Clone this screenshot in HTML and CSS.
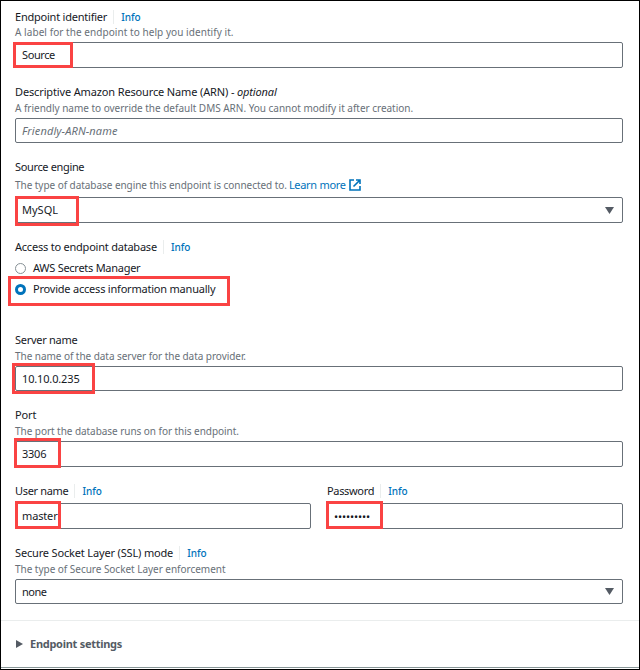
FILE: index.html
```html
<!DOCTYPE html>
<html lang="en">
<head>
<meta charset="utf-8">
<title>Endpoint configuration</title>
<link rel="stylesheet" href="styles.css">
</head>
<body>
<main class="panel">
  <form class="form">
    <section class="field identifier">
      <div class="label"><span class="t-id">Endpoint identifier</span><a class="info">Info</a></div>
      <div class="hint h-id">A label for the endpoint to help you identify it.</div>
      <div class="control"><span class="v-source">Source</span><i class="mark m-source"></i></div>
    </section>
    <section class="field arn">
      <div class="label"><span class="t-arn">Descriptive Amazon Resource Name (ARN) - <em>optional</em></span></div>
      <div class="hint h-arn">A friendly name to override the default DMS ARN. You cannot modify it after creation.</div>
      <div class="control placeholder"><span class="v-arn">Friendly-ARN-name</span></div>
    </section>
    <section class="field engine">
      <div class="label"><span class="t-engine">Source engine</span></div>
      <div class="hint"><span class="h-engine">The type of database engine this endpoint is connected to.</span><a class="learn">Learn more</a><svg class="external" viewBox="0 0 12 12"><path d="M5 1H1v10h10V7M7 1h4v4M11 1L4.5 7.5"/></svg></div>
      <div class="control"><span class="v-mysql">MySQL</span><svg class="caret" viewBox="0 0 9 7"><path d="M0 0h9L4.5 7z"/></svg><i class="mark m-engine"></i></div>
    </section>
    <section class="access">
      <div class="label"><span class="t-access">Access to endpoint database</span><a class="info">Info</a></div>
      <div class="option"><span class="radio"></span><span class="o-aws">AWS Secrets Manager</span></div>
      <div class="option"><span class="radio checked"></span><span class="o-manual">Provide access information manually</span><i class="mark m-manual"></i></div>
    </section>
    <section class="field server">
      <div class="label"><span class="t-server">Server name</span></div>
      <div class="hint h-server">The name of the data server for the data provider.</div>
      <div class="control"><span class="v-ip">10.10.0.235</span><i class="mark m-server"></i></div>
    </section>
    <section class="field port">
      <div class="label"><span class="t-port">Port</span></div>
      <div class="hint h-port">The port the database runs on for this endpoint.</div>
      <div class="control"><span class="v-port">3306</span><i class="mark m-port"></i></div>
    </section>
    <div class="credentials">
      <section>
        <div class="label"><span class="t-user">User name</span><a class="info">Info</a></div>
        <div class="control"><span class="v-master">master</span><i class="mark m-user"></i></div>
      </section>
      <section>
        <div class="label"><span class="t-pass">Password</span><a class="info">Info</a></div>
        <div class="control"><span class="dots">•••••••••</span><i class="mark m-pass"></i></div>
      </section>
    </div>
    <section class="field ssl">
      <div class="label"><span class="t-ssl">Secure Socket Layer (SSL) mode</span><a class="info">Info</a></div>
      <div class="hint h-ssl">The type of Secure Socket Layer enforcement</div>
      <div class="control"><span class="v-none">none</span><svg class="caret" viewBox="0 0 9 7"><path d="M0 0h9L4.5 7z"/></svg></div>
    </section>
  </form>
  <footer class="settings"><svg class="expand" viewBox="0 0 7 8"><path d="M0 0l7 4-7 4z"/></svg><span class="t-set">Endpoint settings</span></footer>
</main>
</body>
</html>
```
FILE: styles.css
```css
* { box-sizing: border-box; }
body { margin: 0; background: #fff; color: #16191f; font: 11px/16px "Noto Sans", "Open Sans", sans-serif; }
.panel { width: 640px; height: 670px; border: 1px solid #000; overflow: hidden; }
.form { height: 619px; padding: 8px 16px 0 14px; }
.label, .hint, .option { display: flex; align-items: center; white-space: nowrap; }
.label { height: 16px; }
.hint { height: 14px; margin-bottom: 3px; color: #687078; font-size: 10px; line-height: 14px; }
.info { display: flex; align-items: center; height: 14px; margin-left: 6px; padding-left: 7px; border-left: 1px solid #eaeded; color: #0073bb; font-size: 10px; font-weight: 500; }
.control { position: relative; display: flex; align-items: center; height: 26px; padding: 0 8px 0 6px; border: 1px solid #687078; border-radius: 2px; white-space: nowrap; }
.identifier { height: 75px; }
.arn { height: 75px; }
.arn .hint { height: 15px; }
.arn .control, .server .control, .ssl .control { height: 25px; }
.placeholder { color: #687078; font-style: italic; }
.engine { height: 80px; }
.engine .hint { height: 19px; }
.learn { margin-left: 2px; color: #0073bb; font-size: 11px; letter-spacing: -0.3px; }
.external { width: 12px; height: 12px; margin-left: 3px; fill: none; stroke: #0073bb; stroke-width: 1.6; }
.caret { width: 9px; height: 7px; margin-left: auto; fill: #545b64; }
.access { height: 93px; }
.access .label { margin-bottom: 3px; }
.option { position: relative; height: 21px; gap: 7px; }
.radio { width: 11px; height: 11px; border: 1px solid #879196; border-radius: 50%; }
.radio.checked { border: 3.5px solid #0073bb; }
.option span + span { padding-bottom: 1px; }
.server { height: 75px; }
.port { height: 76px; }
.server .hint, .ssl .hint, .port .hint { height: 15px; }
.credentials { display: grid; grid-template-columns: 296px 296px; gap: 16px; height: 62px; }
.credentials .label { margin-bottom: 4px; }
.dots { padding-top: 2px; font-size: 11px; line-height: 12px; letter-spacing: -0.15px; }
.settings { display: flex; align-items: center; gap: 7px; height: 48px; padding: 0 0 1px 15px; border-top: 1px solid #eaeded; border-bottom: 1px solid #879596; color: #545b64; font-weight: 700; }
.expand { width: 7px; height: 8px; fill: #545b64; }

.t-id { letter-spacing: -0.22px; }
.t-arn { letter-spacing: -0.14px; }
.t-engine { letter-spacing: -0.35px; }
.t-access { letter-spacing: -0.22px; }
.t-server { letter-spacing: -0.28px; }
.t-port { letter-spacing: -0.1px; }
.t-user, .t-pass { letter-spacing: -0.33px; }
.t-ssl { letter-spacing: -0.16px; }
.t-set { letter-spacing: -0.28px; }
.o-aws { letter-spacing: -0.27px; }
.o-manual { letter-spacing: -0.21px; }
.h-id { letter-spacing: 0.06px; }
.h-arn { letter-spacing: -0.02px; }
.h-engine, .h-server, .h-port { letter-spacing: -0.05px; }
.h-ssl { letter-spacing: -0.03px; }
.v-source { letter-spacing: -0.4px; }
.v-arn { letter-spacing: 0.12px; }
.v-ip { letter-spacing: -0.15px; }
.v-port { letter-spacing: -0.25px; }
.v-master { letter-spacing: -0.15px; }
.v-none { letter-spacing: -0.5px; }

.mark { position: absolute; border: 3px solid #fa4343; }
.m-source { left: -3px; top: -1px; width: 60px; height: 26px; }
.m-engine { left: -1px; top: -2px; width: 64px; height: 30px; }
.m-manual { left: -7px; top: -3px; width: 222px; height: 30px; }
.m-server { left: -4px; top: -4px; width: 83px; height: 31px; }
.m-port { left: -2px; top: -4px; width: 47px; height: 30px; }
.m-user { left: -1px; top: -3px; width: 46px; height: 28px; }
.m-pass { left: -2px; top: -3px; width: 57px; height: 28px; }
```
